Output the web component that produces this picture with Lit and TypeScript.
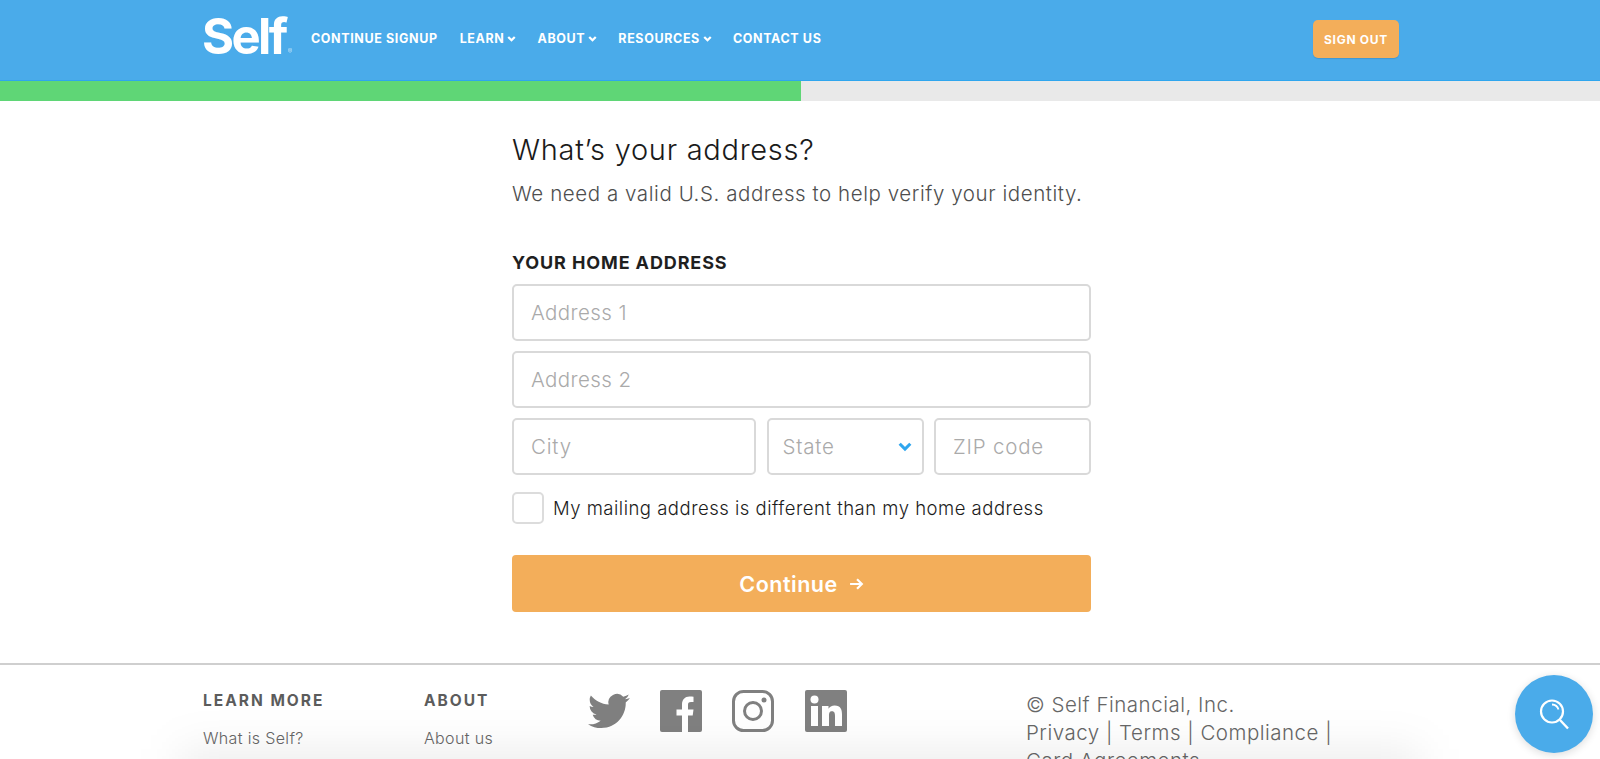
import { LitElement, html, css } from "lit";
import { customElement } from "lit/decorators.js";

const chevron = (w: number, h: number, color: string, sw = 2.6) => html`<svg width=${w} height=${h} viewBox="0 0 10 7"><path d="M1.2 1.2 5 5l3.800-3.800" fill="none" stroke=${color} stroke-width=${sw}/></svg>`;

@customElement("app-root")
export class AppRoot extends LitElement {
  static styles = css`
    :host { display: block; height: 100vh; overflow: hidden; position: relative; background: #fff; font-family: Inter, "Liberation Sans", sans-serif; }
    * { box-sizing: border-box; }
    .top { height: 81px; background: #4aabea; border-bottom: 1px solid #2fa6ee; display: flex; align-items: flex-start; padding-left: 202px; padding-right: 201px; }
    .logo { color: #fff; font-weight: 700; font-size: 49px; line-height: 38px; letter-spacing: -2.6px; margin-top: 18px; width: 90px; display: flex; align-items: flex-end; height: 38px; white-space: nowrap; }
    .reg { font-size: 7px; line-height: 7px; letter-spacing: 0; font-weight: 400; opacity: .6; margin-left: 2px; margin-bottom: 1px; }
    nav { display: flex; gap: 21px; margin-left: 19px; margin-top: 30px; padding-top: 1px; }
    nav a { color: #fff; font-size: 12.5px; font-weight: 700; line-height: 16px; letter-spacing: .62px; display: flex; align-items: center; gap: 3px; white-space: nowrap; }
    nav a:first-child { margin-right: 1px; }
    .signout { margin-left: auto; margin-top: 20px; width: 86px; height: 38px; background: #f3ae5a; color: #fff; border-radius: 5px; font-size: 12px; font-weight: 700; letter-spacing: .7px; display: flex; align-items: center; justify-content: center; box-shadow: 0 1px 1px rgba(0,0,0,.12); }
    .progress { height: 20px; background: #e9e9e9; display: flex; }
    .progress div { width: 801px; background: #5fd676; }
    main { width: 579px; margin-left: 512px; padding-top: 29px; height: 562px; }
    h1 { margin: 0; font-weight: 300; font-size: 29px; line-height: 40px; color: #1a1a1a; letter-spacing: .72px; white-space: nowrap; }
    .sub { margin: 9px 0 0; font-weight: 300; font-size: 20.5px; line-height: 30px; color: #4e4e4e; letter-spacing: .57px; white-space: nowrap; }
    .lbl { margin: 42px 0 0; font-weight: 700; font-size: 18px; line-height: 24px; color: #1f1f1f; letter-spacing: .88px; white-space: nowrap; }
    .fields { display: grid; grid-template-columns: 244px 157px 1fr; grid-auto-rows: 57px; gap: 10px 10.5px; margin-top: 9px; }
    .wide { grid-column: 1 / -1; }
    input, select { width: 100%; height: 100%; border: 2px solid #d9d9d9; border-radius: 5px; background: #fff; font: 300 20.5px Inter, sans-serif; letter-spacing: .4px; color: #aaa; padding: 0 0 0 17px; outline: none; appearance: none; }
    input::placeholder { color: #aaa; opacity: 1; }
    .short { letter-spacing: .8px; }
    .sel { position: relative; }
    .sel select { padding-left: 14px; }
    .sel svg { position: absolute; right: 12px; top: 24px; }
    .check { display: flex; align-items: center; gap: 9px; margin-top: 17px; height: 32px; font-weight: 300; font-size: 18.5px; color: #1c1c1c; letter-spacing: .5px; white-space: nowrap; }
    .box { width: 32px; height: 32px; border: 2px solid #dcdcdc; border-radius: 5px; flex: none; }
    .go { margin-top: 31px; height: 57px; border-radius: 4px; background: #f3ae5a; color: #fff; font-size: 21.5px; font-weight: 600; letter-spacing: .5px; display: flex; align-items: center; justify-content: center; gap: 11px; }
    footer { border-top: 2px solid #cfcfcf; display: flex; padding-left: 203px; height: 200px; }
    .col { width: 221px; padding-top: 26px; }
    .col + .col { width: 165px; }
    .col h4 { margin: 0; font-size: 15.5px; line-height: 20px; font-weight: 700; letter-spacing: 2px; color: #5c5c5c; white-space: nowrap; }
    .col a { display: block; margin-top: 17px; font-size: 16px; font-weight: 300; line-height: 20px; color: #666; letter-spacing: .35px; white-space: nowrap; }
    .social { display: flex; gap: 30.5px; padding-top: 25px; align-items: flex-start; width: 438px; margin-left: -1px; }
    .social svg { display: block; flex: none; }
    .fb { margin-left: -1px; }
    .legal { padding-top: 26px; font-size: 20.5px; line-height: 28px; font-weight: 300; color: #666; letter-spacing: .5px; width: 330px; }
    .fade { position: absolute; left: 180px; right: 180px; bottom: -50px; height: 60px; background: rgba(0,0,0,.07); filter: blur(22px); pointer-events: none; }
    .chat { position: absolute; left: 1515px; top: 675px; width: 78px; height: 78px; border-radius: 50%; background: #4aabea; box-shadow: 0 2px 8px rgba(0,0,0,.14); display: flex; align-items: center; justify-content: center; }
  `;

  render() {
    return html`
      <div class="top">
        <div class="logo">Self<span class="reg">®</span></div>
        <nav>
          <a>CONTINUE SIGNUP</a>
          <a>LEARN ${chevron(9, 6, "#fff")}</a>
          <a>ABOUT ${chevron(9, 6, "#fff")}</a>
          <a>RESOURCES ${chevron(9, 6, "#fff")}</a>
          <a>CONTACT US</a>
        </nav>
        <div class="signout">SIGN OUT</div>
      </div>
      <div class="progress"><div></div></div>
      <main>
        <h1>What’s your address?</h1>
        <p class="sub">We need a valid U.S. address to help verify your identity.</p>
        <p class="lbl">YOUR HOME ADDRESS</p>
        <div class="fields">
          <div class="wide"><input placeholder="Address 1" /></div>
          <div class="wide"><input placeholder="Address 2" /></div>
          <div><input class="short" placeholder="City" /></div>
          <div class="sel"><select class="short"><option>State</option></select>${chevron(14, 10, "#2fa6ee", 2.2)}</div>
          <div><input class="short" placeholder="ZIP code" /></div>
        </div>
        <div class="check"><span class="box"></span>My mailing address is different than my home address</div>
        <div class="go">Continue
          <svg width="15" height="14" viewBox="0 0 14 13"><path d="M1 6.500h11M7.500 2l4.500 4.500L7.500 11" fill="none" stroke="#fff" stroke-width="2"/></svg>
        </div>
      </main>
      <footer>
        <div class="col"><h4>LEARN MORE</h4><a>What is Self?</a></div>
        <div class="col"><h4>ABOUT</h4><a>About us</a></div>
        <div class="social">
          <svg width="42" height="42" viewBox="0 0 24 24"><path fill="#808080" d="M23.950 4.570a10 10 0 0 1-2.820.770 4.960 4.960 0 0 0 2.160-2.720c-.950.550-2 .960-3.120 1.190a4.920 4.920 0 0 0-8.380 4.480C7.690 8.100 4.070 6.130 1.640 3.160a4.820 4.820 0 0 0-.670 2.480c0 1.710.870 3.210 2.190 4.100a4.900 4.900 0 0 1-2.230-.620v.060a4.920 4.920 0 0 0 3.950 4.830 5 5 0 0 1-2.210.080 4.940 4.940 0 0 0 4.600 3.420A9.870 9.870 0 0 1 0 19.540a14 14 0 0 0 7.560 2.210c9.050 0 14-7.500 14-13.980 0-.210 0-.420-.020-.630a9.940 9.940 0 0 0 2.410-2.570z"/></svg>
          <svg class="fb" width="42" height="42" viewBox="0 0 42 42"><rect width="42" height="42" rx="2" fill="#808080"/><path fill="#fff" d="M22 42V25.500H16.500v-6H22V14.500c0-5 3-8 7.500-8 1.500 0 3 .1 4 .2V12H31c-2.500 0-3 1.200-3 3v4.500h5.500l-.8 6H28V42z"/></svg>
          <svg width="42" height="42" viewBox="0 0 42 42"><rect x="1.500" y="1.500" width="39" height="39" rx="10" fill="none" stroke="#808080" stroke-width="3"/><circle cx="21" cy="21" r="8.500" fill="none" stroke="#808080" stroke-width="3"/><circle cx="32" cy="10" r="2.500" fill="#808080"/></svg>
          <svg width="42" height="42" viewBox="0 0 42 42"><rect width="42" height="42" rx="2" fill="#808080"/><circle cx="9.500" cy="9.500" r="4" fill="#fff"/><path fill="#fff" d="M6 16h7v20H6zM17 16h6.500v2.800c1-1.800 3.200-3.300 6.200-3.300 6 0 7.300 4 7.300 9V36h-7V26c0-2.500-.4-4.800-3-4.800s-3 2.100-3 4.600V36h-7z"/></svg>
        </div>
        <div class="legal">© Self Financial, Inc.<br />Privacy | Terms | Compliance |<br />Card Agreements</div>
      </footer>
      <div class="fade"></div>
      <div class="chat">
        <svg width="34" height="34" viewBox="0 0 34 34"><circle cx="15" cy="14.500" r="11" fill="none" stroke="#fff" stroke-width="2.200"/><path d="M23 23l8 8.500" stroke="#fff" stroke-width="2.400" fill="none"/><path d="M15 7.500a7 7 0 0 1 6.500 5" stroke="#fff" stroke-width="1.800" fill="none"/></svg>
      </div>
    `;
  }
}
